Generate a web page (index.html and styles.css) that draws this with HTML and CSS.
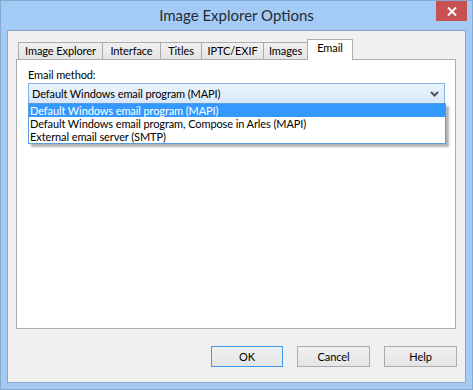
FILE: index.html
```html
<!DOCTYPE html>
<html lang="en">
<head>
  <meta charset="UTF-8">
  <title>Image Explorer Options</title>
  <link rel="stylesheet" href="styles.css">
</head>
<body>
  <div class="window">
    <div class="titlebar">
      <span></span>
      <div class="title">Image Explorer Options</div>
      <div class="close">
        <svg width="10" height="9" viewBox="0 0 10 9">
          <path d="M1 0.5 L9 8.5 M9 0.5 L1 8.5" stroke="#fff" stroke-width="2"/>
        </svg>
      </div>
    </div>

    <div class="client">
      <div class="tabs">
        <div class="tab">Image Explorer</div>
        <div class="tab">Interface</div>
        <div class="tab">Titles</div>
        <div class="tab">IPTC/EXIF</div>
        <div class="tab">Images</div>
        <div class="tab selected">Email</div>
      </div>

      <div class="panel">
        <div class="label">Email method:</div>
        <div class="combo-wrap">
          <div class="combo">
            <span>Default Windows email program (MAPI)</span>
            <svg class="chevron" width="9" height="6" viewBox="0 0 9 6">
              <path d="M1 1 L4.5 4.5 L8 1" fill="none" stroke="#555" stroke-width="2"/>
            </svg>
          </div>
          <ul class="dropdown">
            <li class="active">Default Windows email program (MAPI)</li>
            <li>Default Windows email program, Compose in Arles (MAPI)</li>
            <li>External email server (SMTP)</li>
          </ul>
        </div>
      </div>

      <div class="buttons">
        <button class="btn default">OK</button>
        <button class="btn">Cancel</button>
        <button class="btn">Help</button>
      </div>
    </div>
  </div>
</body>
</html>
```

FILE: styles.css
```css
* {
  margin: 0;
  padding: 0;
  box-sizing: border-box;
}

body {
  font-family: Lato, "Liberation Sans", sans-serif;
  font-size: 11px;
  letter-spacing: -0.1px;
  color: #000;
}

.window {
  width: 473px;
  height: 390px;
  background: #a3cbf5;
  border: 1px solid #86a9d2;
  display: flex;
  flex-direction: column;
}

.titlebar {
  height: 29px;
  display: grid;
  grid-template-columns: 1fr auto 1fr;
  align-items: center;
}

.title {
  font-size: 15px;
  letter-spacing: 0;
  color: #262b33;
  padding-bottom: 2px;
}

.close {
  justify-self: end;
  align-self: start;
  width: 31px;
  height: 20px;
  margin-right: 5px;
  background: #c75050;
  display: flex;
  justify-content: center;
  align-items: center;
}

.client {
  flex: 1;
  margin: 0 6px 6px 6px;
  background: #f0f0f0;
  border: 1px solid #8aa8cb;
  padding: 8px 8px 15px 8px;
  display: flex;
  flex-direction: column;
}

.tabs {
  display: flex;
  align-items: flex-end;
  padding-left: 2px;
  height: 20px;
}

.tab {
  height: 17px;
  border: 1px solid #acacac;
  border-bottom: none;
  margin-right: -1px;
  background: linear-gradient(#f0f0f0, #e5e5e5);
  line-height: 16px;
  text-align: center;
  white-space: nowrap;
}

.tab:nth-child(1) { width: 85px; }
.tab:nth-child(2) { width: 59px; }
.tab:nth-child(3) { width: 42px; }
.tab:nth-child(4) { width: 63px; }
.tab:nth-child(5) { width: 45px; }

.tab.selected {
  width: 46px;
  height: 21px;
  margin: 0 0 -1px 0;
  background: #fff;
  position: relative;
  z-index: 1;
  line-height: 15px;
}

.panel {
  flex: 1;
  margin-right: 1px;
  background: #fff;
  border: 1px solid #adadad;
  padding: 7px 10px 0 11px;
}

.label {
  line-height: 16px;
}

.combo-wrap {
  position: relative;
}

.combo {
  height: 21px;
  border: 1px solid #7eb4ea;
  background: linear-gradient(#ecf4fc, #d7e8fb);
  display: flex;
  align-items: center;
  justify-content: space-between;
  padding: 0 5px 0 3px;
}

.dropdown {
  position: absolute;
  top: 20px;
  left: 0;
  width: calc(100% + 1px);
  list-style: none;
  background: #fff;
  border: 1px solid #5b9be0;
  box-shadow: 3px 3px 2px rgba(0, 0, 0, 0.3);
}

.dropdown li {
  height: 13px;
  line-height: 13px;
  padding-left: 1px;
  white-space: nowrap;
}

.dropdown li.active {
  background: #3399ff;
  color: #fff;
}

.buttons {
  margin-top: 17px;
  display: flex;
  justify-content: flex-end;
  gap: 14px;
}

.btn {
  height: 21px;
  width: 73px;
  font: inherit;
  letter-spacing: inherit;
  color: #000;
  border: 1px solid #acacac;
  background: linear-gradient(#f0f0f0, #e5e5e5);
}

.btn.default {
  border-color: #3c9bf5;
  width: 72px;
}
```
